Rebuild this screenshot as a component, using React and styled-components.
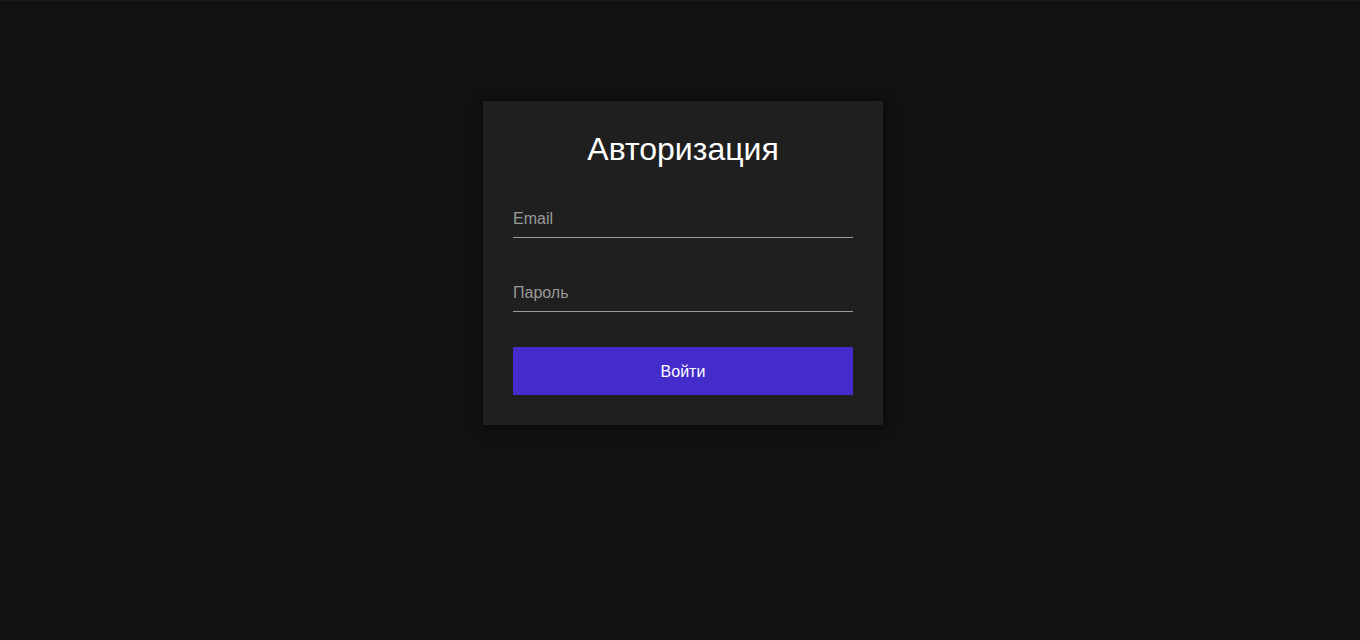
import React, { useState } from 'react';
import styled, { createGlobalStyle } from 'styled-components';

const GlobalStyle = createGlobalStyle`
	html, body {
		margin: 0;
		padding: 0;
		background: #111111;
		font-family: Arial, "Liberation Sans", sans-serif;
	}
	* {
		box-sizing: border-box;
	}
`;

const Page = styled.div`
	min-height: 640px;
	border-top: 1px solid #1a1a1a;
	display: flex;
	justify-content: center;
	align-items: flex-start;
	padding: 100px 0 0 6px;
`;

const Card = styled.form`
	width: 400px;
	padding: 30px;
	background: #1f1f1f;
	box-shadow: 0 2px 10px rgba(0, 0, 0, 0.6);
	display: flex;
	flex-direction: column;
`;

const Title = styled.h1`
	margin: 0 0 35px;
	font-size: 32px;
	font-weight: 400;
	color: #ffffff;
	text-align: center;
`;

const Field = styled.input`
	width: 100%;
	height: 35px;
	padding: 7px 0 9px;
	margin-bottom: ${(p) => p.$gap}px;
	background: transparent;
	border: none;
	border-bottom: 1px solid #9c9c9c;
	outline: none;
	color: #ffffff;
	font-family: inherit;
	font-size: 16px;

	&::placeholder {
		color: #9a9a9a;
	}
`;

const Submit = styled.button`
	height: 48px;
	width: 100%;
	padding: 2px 0 0;
	border: none;
	background: #432cca;
	color: #ffffff;
	font-family: inherit;
	font-size: 16px;
	cursor: pointer;
`;

export default () => {
	const [email, setEmail] = useState('');
	const [password, setPassword] = useState('');

	return (
		<>
			<GlobalStyle />
			<Page>
				<Card onSubmit={(e) => e.preventDefault()}>
					<Title>Авторизация</Title>
					<Field
						$gap={39}
						type="email"
						placeholder="Email"
						value={email}
						onChange={(e) => setEmail(e.target.value)}
					/>
					<Field
						$gap={35}
						type="password"
						placeholder="Пароль"
						value={password}
						onChange={(e) => setPassword(e.target.value)}
					/>
					<Submit type="submit">Войти</Submit>
				</Card>
			</Page>
		</>
	);
};
